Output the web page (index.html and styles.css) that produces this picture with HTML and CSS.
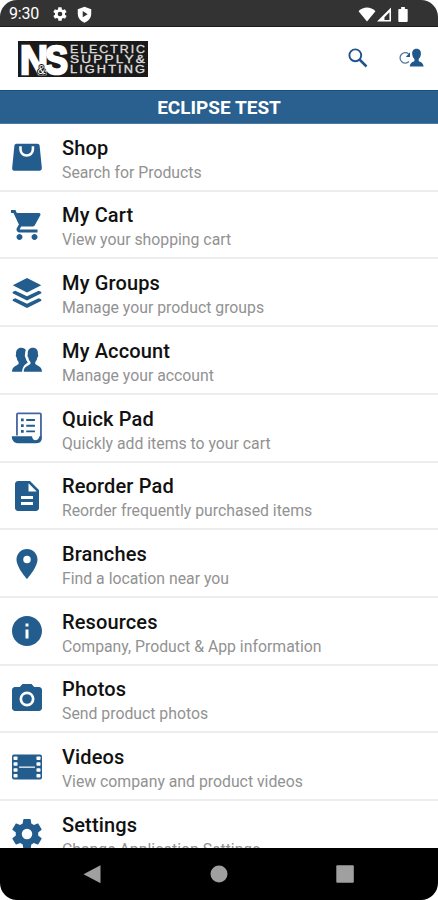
FILE: index.html
```html
<!DOCTYPE html>
<html lang="en">
<head>
<meta charset="utf-8">
<title>Eclipse Test</title>
<link rel="stylesheet" href="styles.css">
</head>
<body>
<div class="phone">
  <div class="status">
    <span class="time">9:30</span>
    <svg class="st-gear" viewBox="0 0 24 24"><path d="M19.4 13c0-.3.1-.6.1-1s0-.7-.1-1l2.1-1.600c.2-.2.3-.4.1-.7l-2-3.400c-.1-.2-.4-.3-.6-.2l-2.500 1c-.5-.4-1.100-.7-1.700-1l-.4-2.600c0-.3-.2-.5-.5-.5h-4c-.2 0-.4.2-.5.4l-.4 2.700c-.6.2-1.100.6-1.700 1l-2.500-1c-.2-.1-.5 0-.6.2l-2 3.400c-.1.2 0 .5.2.7L4.500 11v2l-2.100 1.600c-.2.2-.3.4-.1.7l2 3.400c.1.2.4.3.6.2l2.500-1c.5.4 1.100.7 1.700 1l.4 2.700c0 .2.2.4.5.4h4c.3 0 .5-.2.5-.4l.4-2.700c.6-.2 1.100-.6 1.700-1l2.500 1c.2.1.5 0 .6-.2l2-3.400c.1-.2.1-.5-.1-.7zM12 15.500a3.500 3.500 0 1 1 0-7 3.500 3.500 0 0 1 0 7z"/></svg>
    <svg class="st-shield" viewBox="0 0 24 24"><path fill-rule="evenodd" d="M12 1 2.500 4.500V11c0 6 4 10.500 9.500 12.500 5.500-2 9.500-6.500 9.500-12.500V4.500zM9.500 7v9l7-4.500z"/></svg>
    <span class="grow"></span>
    <svg class="st-wifi" viewBox="0 0 18 16"><path d="M0 4.500C5-.8 13-.8 18 4.500L9 15.500z"/></svg>
    <svg class="st-signal" viewBox="0 0 16 16"><path fill-rule="evenodd" d="M15.500.5v15H.5zM13.800 5.500 8.500 11v2.800h5.300z"/></svg>
    <svg class="st-battery" viewBox="0 0 10 16"><path d="M3 0h4v2h2.200q.8 0 .8.800V15q0 1-1 1H1q-1 0-1-1V2.800Q0 2 .8 2H3z"/></svg>
  </div>
  <header class="topbar">
    <svg class="logo" viewBox="0 0 130 36">
      <rect width="130" height="36" fill="#1b1a1b"/>
      <g class="logo-big">
        <text x="2" y="33" textLength="28" lengthAdjust="spacingAndGlyphs">N</text>
        <text x="27" y="33" textLength="23" lengthAdjust="spacingAndGlyphs">S</text>
      </g>
      <text class="logo-amp" x="19.500" y="33" textLength="8" lengthAdjust="spacingAndGlyphs">&amp;</text>
      <g class="logo-small">
        <text x="52" y="11.500" textLength="77" lengthAdjust="spacingAndGlyphs">ELECTRIC</text>
        <text x="52" y="21.500" textLength="77" lengthAdjust="spacingAndGlyphs">SUPPLY&amp;</text>
        <text x="52" y="31.500" textLength="77" lengthAdjust="spacingAndGlyphs">LIGHTING</text>
      </g>
    </svg>
    <span class="grow"></span>
    <svg class="search" viewBox="0 0 20 20"><circle cx="7.300" cy="7.300" r="5.900" fill="none" stroke="#20558c" stroke-width="1.900"/><path d="m11.500 11.500 7 7" fill="none" stroke="#20558c" stroke-width="2.500"/></svg>
    <svg class="switch" viewBox="0 0 26 20"><path d="M10.500 5.800A5.200 5.200 0 1 0 11 13.500" fill="none" stroke="#5279a1" stroke-width="1.300"/><path d="M12 4.300V9H7.800z"/><path d="M18.500.8c3 0 4.700 2.200 4.400 5.200-.1 2.300-1 4-2.200 5v2c1.500 1.100 4.300 1.200 4.900 5.500H11.800c.4-4.300 3.200-4.400 4.600-5.500v-2c-1.200-1-2-2.700-2.200-5-.2-3 1.300-5.200 4.300-5.200z"/></svg>
  </header>
  <div class="banner">ECLIPSE TEST</div>
  <main class="menu">
    <div class="row"><svg class="icon" viewBox="0 0 24 24"><path fill-rule="evenodd" d="M5 3.200h14q1.200 0 1.400 1.200l1.500 15q.1 1.700-1.400 1.700h-17q-1.500 0-1.400-1.700l1.500-15Q3.800 3.200 5 3.200zM6.800 4.800v1.500c0 3.300 2.100 5.500 5 5.500s5-2.200 5-5.500V4.800h-1.700v1.500c0 2.400-1.200 3.800-3.300 3.800s-3.300-1.400-3.300-3.800V4.800z"/></svg><div><h2>Shop</h2><p>Search for Products</p></div></div>
    <div class="row"><svg class="icon" viewBox="0 0 24 24"><path d="M7 18c-1.100 0-1.990.9-1.990 2S5.900 22 7 22s2-.9 2-2-.9-2-2-2zM1.300 2v2H3l3.600 7.590-1.350 2.450c-.16.28-.25.610-.25.960 0 1.100.9 2 2 2h12v-2H7.420c-.14 0-.25-.11-.25-.25l.03-.12.900-1.630h7.450c.75 0 1.410-.41 1.750-1.030l3.580-6.490A1 1 0 0 0 20 4H5.210l-.94-2H1.300zm15.700 16c-1.100 0-1.990.9-1.990 2s.89 2 1.990 2 2-.9 2-2-.9-2-2-2z"/></svg><div><h2>My Cart</h2><p>View your shopping cart</p></div></div>
    <div class="row"><svg class="icon" viewBox="0 0 24 24"><path d="m12 2 9.500 4.800-9.500 4.900-9.500-4.900z"/><path d="m2.700 11.200 1.500-.7 7.800 3.700 7.800-3.700 1.500.7q.8.600 0 1.200L12 17l-9.300-4.600q-.8-.6 0-1.200zM2.700 16.200l1.500-.7 7.800 3.700 7.800-3.700 1.500.7q.8.600 0 1.200L12 22l-9.300-4.600q-.8-.6 0-1.200z"/></svg><div><h2>My Groups</h2><p>Manage your product groups</p></div></div>
    <div class="row"><svg class="icon" viewBox="0 0 24 24"><path d="M15.900 3.900c2.400 0 3.600 1.700 3.400 4.400.4.500.2 1.500-.4 2-.2 1.400-.8 2.300-1.400 3v1.400c1.300 1.200 4.300 1.300 4.500 5.200H9.800c.2-3.900 3.200-4 4.500-5.200v-1.400c-.6-.7-1.200-1.600-1.400-3-.6-.5-.8-1.500-.4-2-.2-2.700 1-4.400 3.400-4.400z"/><path d="M8.200 3.900c1.300 0 2.400.5 3 1.400-.4.900-.5 1.900-.5 2.900-.3 1-.1 1.900.5 2.600.2 1.100.6 1.900 1.200 2.600v.4c-1.500 1-3.300 2-3.700 6.100H2c.2-3.900 3.100-4 4.400-5.200v-1.400c-.6-.7-1.100-1.600-1.300-3-.6-.5-.8-1.500-.4-2-.2-2.700 1.100-4.400 3.500-4.400z"/></svg><div><h2>My Account</h2><p>Manage your account</p></div></div>
    <div class="row"><svg class="icon" viewBox="0 0 24 24"><path fill="none" stroke="#4564a0" stroke-width="1.200" d="M5.300 17V3q0-.7.700-.7h14.600q.7 0 .7.700v15.500q0 2.700-2.600 2.700H18"/><path d="M1.900 17.500h13.500c.1 1.500.8 2.600 2 2.600 1.400 0 2.600-.8 2.900-2.600h1.300V19c0 2-1.300 3.100-3.200 3.100H5.700c-2.400 0-3.900-2.100-3.800-4.600zM8 5.700h1.800v1.800H8zM11.500 6h5.800v1.300h-5.800zM8 9.500h1.800v1.800H8zM11.500 9.800h5.800v1.300h-5.800zM8 13.300h1.800v1.800H8zM11.500 13.600h5.800v1.300h-5.800z"/></svg><div><h2>Quick Pad</h2><p>Quickly add items to your cart</p></div></div>
    <div class="row"><svg class="icon" viewBox="0 0 24 24"><path d="M14 2H6c-1.100 0-1.990.9-1.990 2L4 20c0 1.100.89 2 1.990 2H18c1.100 0 2-.9 2-2V8l-6-6zm2 16H8v-2h8v2zm0-4H8v-2h8v2zm-3-5V3.500L18.500 9H13z"/></svg><div><h2>Reorder Pad</h2><p>Reorder frequently purchased items</p></div></div>
    <div class="row"><svg class="icon" viewBox="0 0 24 24"><path d="M12 2C8.130 2 5 5.130 5 9c0 5.250 7 13 7 13s7-7.750 7-13c0-3.870-3.130-7-7-7zm0 9.500a2.500 2.500 0 0 1 0-5 2.500 2.500 0 0 1 0 5z"/></svg><div><h2>Branches</h2><p>Find a location near you</p></div></div>
    <div class="row"><svg class="icon" viewBox="0 0 24 24"><path d="M12 2C6.480 2 2 6.480 2 12s4.480 10 10 10 10-4.480 10-10S17.520 2 12 2zm1 15h-2v-6h2v6zm0-8h-2V7h2v2z"/></svg><div><h2>Resources</h2><p>Company, Product &amp; App information</p></div></div>
    <div class="row"><svg class="icon" viewBox="0 0 24 24"><path fill-rule="evenodd" d="M9 2 7.170 4H4c-1.100 0-2 .9-2 2v12c0 1.100.9 2 2 2h16c1.100 0 2-.9 2-2V6c0-1.100-.9-2-2-2h-3.170L15 2H9zm3 15a5 5 0 1 1 0-10 5 5 0 0 1 0 10z"/><circle cx="12" cy="12" r="3.200"/></svg><div><h2>Photos</h2><p>Send product photos</p></div></div>
    <div class="row"><svg class="icon" viewBox="0 0 24 24"><rect x="2" y="3.700" width="20" height="16.600" rx="1.300"/><g fill="#fff"><rect x="3" y="5" width="2.700" height="2.300" rx=".5"/><rect x="3" y="8.900" width="2.700" height="2.300" rx=".5"/><rect x="3" y="12.800" width="2.700" height="2.300" rx=".5"/><rect x="3" y="16.700" width="2.700" height="2.300" rx=".5"/><rect x="18.300" y="5" width="2.700" height="2.300" rx=".5"/><rect x="18.300" y="8.900" width="2.700" height="2.300" rx=".5"/><rect x="18.300" y="12.800" width="2.700" height="2.300" rx=".5"/><rect x="18.300" y="16.700" width="2.700" height="2.300" rx=".5"/><rect x="6.700" y="11.700" width="10.600" height=".8"/></g></svg><div><h2>Videos</h2><p>View company and product videos</p></div></div>
    <div class="row"><svg class="icon" viewBox="0 0 24 24"><path d="M19.430 12.980c.04-.32.070-.64.070-.98s-.03-.66-.07-.98l2.110-1.650c.19-.15.240-.42.120-.64l-2-3.460c-.12-.22-.39-.3-.61-.22l-2.490 1c-.52-.4-1.080-.73-1.690-.98l-.38-2.650C14.460 2.180 14.250 2 14 2h-4c-.25 0-.46.180-.49.420l-.38 2.650c-.61.250-1.170.590-1.690.980l-2.490-1c-.23-.09-.49 0-.61.220l-2 3.460c-.13.220-.07.490.12.640l2.110 1.650c-.04.320-.07.650-.07.980s.03.660.07.980l-2.110 1.650c-.19.150-.24.420-.12.640l2 3.460c.12.220.39.300.61.220l2.490-1c.52.400 1.080.730 1.690.980l.38 2.650c.03.240.24.420.49.420h4c.25 0 .46-.18.490-.42l.38-2.650c.61-.25 1.170-.59 1.690-.98l2.490 1c.23.090.49 0 .61-.22l2-3.460c.12-.22.070-.49-.12-.64l-2.110-1.650zM12 15.500a3.500 3.500 0 1 1 0-7 3.500 3.500 0 0 1 0 7z"/></svg><div><h2>Settings</h2><p>Change Application Settings</p></div></div>
  </main>
  <nav class="navbar">
    <svg viewBox="0 0 18 18"><path d="M.5 9.300 17.500.3v17.900z"/></svg>
    <svg viewBox="0 0 18 18"><circle cx="9" cy="9" r="8.500"/></svg>
    <svg viewBox="0 0 18 18"><rect x=".3" y=".3" width="17.500" height="17.500" rx="1"/></svg>
  </nav>
</div>
</body>
</html>
```
FILE: styles.css
```css
* { box-sizing: border-box; }
body { margin: 0; background: #fff; font-family: Roboto, "Liberation Sans", sans-serif; }
svg { display: block; flex: none; }
.phone {
  width: 438px; height: 900px; display: flex; flex-direction: column;
  overflow: hidden; background: #fff; border-radius: 17px;
}
.grow { flex: 1; }
.status {
  flex: none; height: 27px; display: flex; align-items: center;
  padding: 2px 30px 0 9px; background: #333; color: #fff;
  border-bottom: 1px solid #1d1d1d;
}
.status svg { fill: #fff; }
.time { width: 43px; font-size: 16px; line-height: 24px; letter-spacing: -0.2px; }
.st-gear { width: 16px; height: 16px; margin-right: 8px; }
.st-shield { width: 17px; height: 17px; }
.st-wifi { width: 18px; height: 15px; }
.st-signal { width: 16px; height: 15px; margin-right: 5px; }
.st-battery { width: 10px; height: 15px; margin-left: 1px; }
.topbar { flex: none; height: 63px; display: flex; align-items: center; padding: 0 14px 0 18px; }
.logo { width: 130px; height: 36px; overflow: visible; }
.logo-big { font: 700 41px "Liberation Sans", sans-serif; fill: #fff; stroke: #fff; stroke-width: 2.4px; }
.logo-amp { font: 12px "Liberation Sans", sans-serif; fill: #fff; stroke: #1b1a1b; stroke-width: 2px; paint-order: stroke; }
.logo-small { font: 10px "Liberation Sans", sans-serif; letter-spacing: 1.6px; fill: #dedede; stroke: #dedede; stroke-width: 0.3px; }
.search { width: 20px; height: 20px; margin: -2px 30px 0 0; }
.switch { width: 26px; height: 20px; margin-top: -1px; fill: #20588c; }
.banner {
  flex: none; height: 34px; background: #2a608f; color: #fff;
  border-top: 1px solid #174f80; border-bottom: 1px solid #4b79a1;
  font-weight: 700; font-size: 19px; line-height: 34px; text-align: center;
}
.menu { flex: 1; min-height: 0; overflow: hidden; }
.row {
  height: 67.73px; display: flex; align-items: flex-start; gap: 17px;
  padding-left: 9px; border-bottom: 2px solid #ededed;
}
.icon { width: 36px; height: 36px; margin-top: 15.2px; fill: #235d8e; }
.row h2 { margin: 10.7px 0 0; font-size: 20px; line-height: 26px; font-weight: 500; color: #111; letter-spacing: 0.14px; }
.row p { margin: 0; font-size: 15.8px; line-height: 23.4px; color: #929292; }
.navbar {
  flex: none; height: 52px; display: flex; justify-content: space-between; align-items: center;
  padding: 0 84px 0 83px; background: #000;
}
.navbar svg { width: 18px; height: 18px; fill: #a0a0a0; }
```
